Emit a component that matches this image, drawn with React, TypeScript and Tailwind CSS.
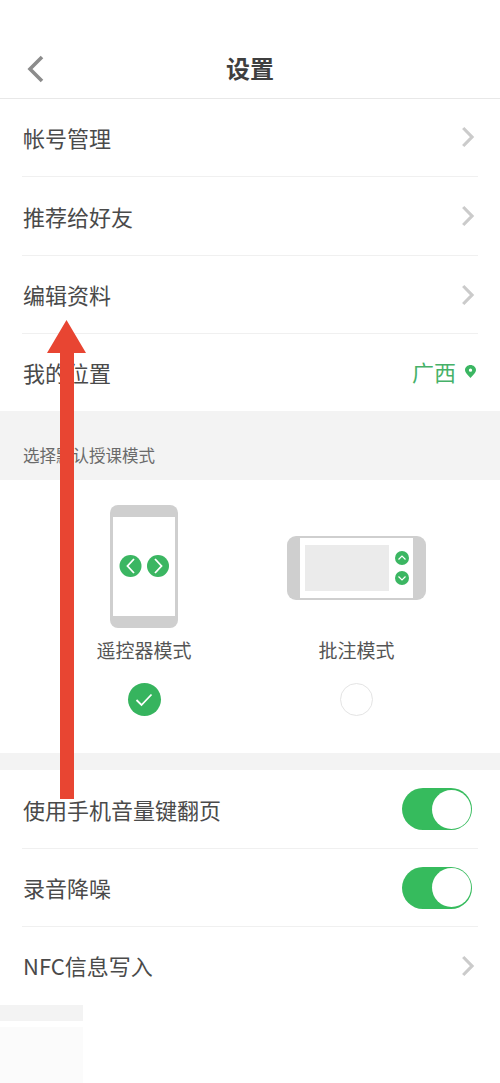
const font = { fontFamily: '"Noto Sans CJK SC", "Noto Sans", sans-serif' };

function Chevron() {
  return (
    <svg width="14" height="22" viewBox="0 0 14 22" className="block">
      <path d="M2.200 2 L11 11 L2.200 20" fill="none" stroke="#cbcbcb" strokeWidth="3.200" />
    </svg>
  );
}

function Row({ label, children, last, tall }: { label: string; children?: React.ReactNode; last?: boolean; tall?: boolean }) {
  return (
    <div className={tall ? "h-[79px] mx-[22px] flex items-center justify-between relative" : "h-[78px] mx-[22px] flex items-center justify-between relative"}>
      <span className="text-[22px] leading-none text-[#4a4a4a] ml-px -mt-[2px]">{label}</span>
      {children}
      {!last && <div className="absolute left-0 right-0 bottom-0 h-px bg-[#f0f0f0]" />}
    </div>
  );
}

function Toggle() {
  return (
    <div className="w-[70px] h-[42px] rounded-full bg-[#36bb5d] p-[1.5px] flex justify-end mr-[6px] -mt-[1px]">
      <div className="w-[39px] h-[39px] rounded-full bg-white" />
    </div>
  );
}

function PhoneIcon() {
  return (
    <svg width="68" height="124" viewBox="0 0 68 124" className="block">
      <rect width="68" height="123" rx="8" fill="#cfcfcf" />
      <rect x="3" y="12" width="62" height="99" fill="#fff" />
      <circle cx="20.500" cy="61" r="11" fill="#3bb662" />
      <circle cx="48" cy="61" r="11" fill="#3bb662" />
      <path d="M24 54 L17.500 61 L24 68" fill="none" stroke="#fff" strokeWidth="1.800" />
      <path d="M45 54 L51.500 61 L45 68" fill="none" stroke="#fff" strokeWidth="1.800" />
    </svg>
  );
}

function TabletIcon() {
  return (
    <svg width="139" height="66" viewBox="0 0 139 66" className="block">
      <rect y="1" width="139" height="64" rx="9" fill="#cfcfcf" />
      <rect x="13" y="3" width="113" height="60" fill="#fff" />
      <rect x="18" y="10" width="84" height="46" fill="#ebebeb" />
      <circle cx="115" cy="23" r="7" fill="#3bb662" />
      <circle cx="115" cy="43" r="7" fill="#3bb662" />
      <path d="M111.500 24.500 L115 21 L118.500 24.500" fill="none" stroke="#fff" strokeWidth="1.200" />
      <path d="M111.500 41.500 L115 45 L118.500 41.500" fill="none" stroke="#fff" strokeWidth="1.200" />
    </svg>
  );
}

export default function App() {
  return (
    <div className="w-[500px] h-[1083px] bg-white relative overflow-hidden" style={font}>
      <header className="h-[99px] border-b border-[#e8e8e8] relative flex items-center justify-center pt-[38px]">
        <span className="text-[24px] font-bold leading-none text-[#3f3f3f]">设置</span>
        <svg width="20" height="30" viewBox="0 0 20 30" className="absolute left-[26px] top-[54px]">
          <path d="M16 3 L4 15 L16 27" fill="none" stroke="#8c8c8c" strokeWidth="3.600" />
        </svg>
      </header>

      <Row label="帐号管理"><div className="mr-[3px] -mt-[2px]"><Chevron /></div></Row>
      <Row label="推荐给好友" tall><div className="mr-[3px] -mt-[1px]"><Chevron /></div></Row>
      <Row label="编辑资料"><div className="mr-[3px] -mt-[1px]"><Chevron /></div></Row>
      <div className="-mb-[1px]">
        <Row label="我的位置" last>
          <div className="flex items-center gap-[10px] mr-[2px] -mt-[5px]">
            <span className="text-[22px] leading-none text-[#46b168]">广西</span>
            <svg width="11" height="13" viewBox="0 0 12 14" preserveAspectRatio="none" className="block mt-[2px] -ml-px">
              <path fillRule="evenodd" d="M6 0 C9.200 0 12 2.300 12 5.500 C12 8.500 8.500 11.500 6 14 C3.500 11.500 0 8.500 0 5.500 C0 2.300 2.800 0 6 0 Z M6 3.800 A1.800 1.800 0 1 0 6 7.400 A1.800 1.800 0 1 0 6 3.800 Z" fill="#3bb662" />
            </svg>
          </div>
        </Row>
      </div>

      <div className="h-[69px] bg-[#f3f3f3] flex items-end pb-[15px] px-[23px]">
        <span className="text-[16.500px] leading-[20px] text-[#6a6a6a]">选择默认授课模式</span>
      </div>

      <section className="h-[273px] relative">
        <div className="absolute left-[96px] top-[25px] w-[96px] flex flex-col items-center">
          <PhoneIcon />
          <span className="text-[19px] leading-none mt-[11px] whitespace-nowrap text-[#555555]">遥控器模式</span>
          <div className="mt-[24px] w-[33px] h-[33px] rounded-full bg-[#36b45e] flex items-center justify-center">
            <svg width="18" height="14" viewBox="0 0 18 14"><path d="M1.500 7 L6.500 12 L16.500 1.500" fill="none" stroke="#fff" strokeWidth="1.800" /></svg>
          </div>
        </div>
        <div className="absolute left-[287px] top-[55px] w-[139px] flex flex-col items-center">
          <TabletIcon />
          <span className="text-[19px] leading-none mt-[39px] whitespace-nowrap text-[#555555]">批注模式</span>
          <div className="mt-[24px] w-[33px] h-[33px] rounded-full border border-[#e4e4e4]" />
        </div>
      </section>

      <div className="h-[17px] bg-[#f3f3f3]" />

      <Row label="使用手机音量键翻页" tall><Toggle /></Row>
      <Row label="录音降噪"><Toggle /></Row>
      <Row label="NFC信息写入" last><div className="mr-[3px] -mt-[1px]"><Chevron /></div></Row>

      <div className="w-[83px] h-[16px] bg-[#f3f3f3]" />
      <div className="w-[83px] h-[56px] bg-[#fbfbfb] mt-[6px]" />

      <svg width="39" height="479" viewBox="0 0 39 479" className="absolute left-[47px] top-[320px]">
        <path d="M19.500 0 L39 33 L27 33 L27 479 L13 479 L13 33 L0 33 Z" fill="#e84532" />
      </svg>
    </div>
  );
}
